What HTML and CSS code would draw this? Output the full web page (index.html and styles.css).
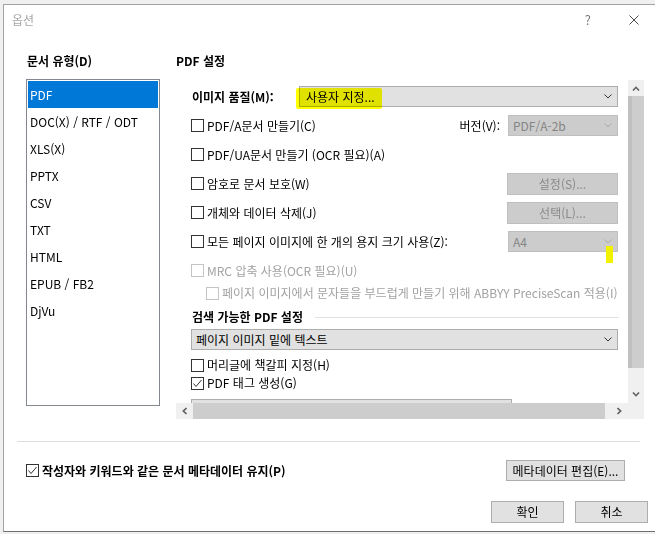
FILE: index.html
```html
<!DOCTYPE html>
<html lang="ko">
<head>
<meta charset="utf-8">
<title>옵션</title>
<link rel="stylesheet" href="styles.css">
</head>
<body>
<div class="backdrop"></div>
<div class="dialog">
  <div class="titlebar">
    <span class="title">옵션</span>
    <span class="help">?</span>
    <svg class="close" width="10" height="10" viewBox="0 0 10 10"><path d="M0.5 0.5 L9.5 9.5 M9.5 0.5 L0.5 9.5" stroke="#4a4a4a" stroke-width="1" fill="none"/></svg>
  </div>

  <div class="main">
    <div class="left">
      <div class="hdr hdr-left">문서 유형(D)</div>
      <div class="list">
        <div class="item selected">PDF</div>
        <div class="item">DOC(X) / RTF / ODT</div>
        <div class="item">XLS(X)</div>
        <div class="item">PPTX</div>
        <div class="item">CSV</div>
        <div class="item">TXT</div>
        <div class="item">HTML</div>
        <div class="item">EPUB / FB2</div>
        <div class="item">DjVu</div>
      </div>
    </div>

    <div class="right">
      <div class="hdr hdr-right">PDF 설정</div>
      <div class="scroll">
        <div class="viewport">
          <div class="row">
            <span class="qlabel">이미지 품질(M):</span>
            <div class="combo combo-q">
              <span class="combo-text">사용자 지정...</span>
              <svg class="chev" width="8" height="5" viewBox="0 0 8 5"><path d="M0.5 0.5 L4 4 L7.5 0.5" stroke="#333" fill="none"/></svg>
              <span class="marker"></span>
            </div>
          </div>
          <div class="row">
            <span class="check"><span class="cb"></span><span>PDF/A문서 만들기(C)</span></span>
            <span class="ver">버전(V):</span>
            <div class="combo combo-dis combo-side">
              <span class="combo-text">PDF/A-2b</span>
              <svg class="chev" width="8" height="5" viewBox="0 0 8 5"><path d="M0.5 0.5 L4 4 L7.5 0.5" stroke="#a8a8a8" fill="none"/></svg>
            </div>
          </div>
          <div class="row">
            <span class="check"><span class="cb"></span><span>PDF/UA문서 만들기 (OCR 필요)(A)</span></span>
          </div>
          <div class="row">
            <span class="check"><span class="cb"></span><span>암호로 문서 보호(W)</span></span>
            <span class="btn btn-dis btn-side">설정(S)...</span>
          </div>
          <div class="row">
            <span class="check"><span class="cb"></span><span>개체와 데이터 삭제(J)</span></span>
            <span class="btn btn-dis btn-side">선택(L)...</span>
          </div>
          <div class="row">
            <span class="check"><span class="cb"></span><span>모든 페이지 이미지에 한 개의 용지 크기 사용(Z):</span></span>
            <div class="combo combo-dis combo-side combo-a4">
              <span class="combo-text">A4</span>
              <svg class="chev" width="8" height="5" viewBox="0 0 8 5"><path d="M0.5 0.5 L4 4 L7.5 0.5" stroke="#a8a8a8" fill="none"/></svg>
              <span class="mark"></span>
            </div>
          </div>
          <div class="row">
            <span class="check dis"><span class="cb cb-dis"></span><span>MRC 압축 사용(OCR 필요)(U)</span></span>
          </div>
          <div class="row-sm indent">
            <span class="check dis"><span class="cb cb-dis"></span><span>페이지 이미지에서 문자들을 부드럽게 만들기 위해 ABBYY PreciseScan 적용(I)</span></span>
          </div>
          <div class="group">
            <span class="group-title">검색 가능한 PDF 설정</span>
            <span class="group-line"></span>
          </div>
          <div class="combo combo-full">
            <span class="combo-text">페이지 이미지 밑에 텍스트</span>
            <svg class="chev" width="8" height="5" viewBox="0 0 8 5"><path d="M0.5 0.5 L4 4 L7.5 0.5" stroke="#333" fill="none"/></svg>
          </div>
          <div class="row-sm gap7">
            <span class="check"><span class="cb"></span><span>머리글에 책갈피 지정(H)</span></span>
          </div>
          <div class="row-sm gap2">
            <span class="check"><span class="cb"><svg width="11" height="11" viewBox="0 0 11 11"><path d="M1.5 5.5 L4 8.5 L9.5 2" stroke="#333" fill="none"/></svg></span><span>PDF 태그 생성(G)</span></span>
          </div>
          <div class="partial"></div>
        </div>

        <div class="vbar">
          <span class="sb-arrow"><svg width="8" height="5" viewBox="0 0 8 5"><path d="M1 4.5 L4 1.3 L7 4.5" stroke="#606060" stroke-width="1.6" fill="none"/></svg></span>
          <span class="vthumb"></span>
          <span class="sb-fill"></span>
          <span class="sb-arrow sb-arrow-down"><svg width="8" height="5" viewBox="0 0 8 5"><path d="M1 0.5 L4 3.7 L7 0.5" stroke="#606060" stroke-width="1.6" fill="none"/></svg></span>
        </div>
        <div class="hbar">
          <span class="sb-harrow"><svg width="5" height="8" viewBox="0 0 5 8"><path d="M4.5 1 L1.3 4 L4.5 7" stroke="#606060" stroke-width="1.6" fill="none"/></svg></span>
          <span class="hthumb"></span>
          <span class="sb-fill"></span>
          <span class="sb-harrow"><svg width="5" height="8" viewBox="0 0 5 8"><path d="M0.5 1 L3.7 4 L0.5 7" stroke="#606060" stroke-width="1.6" fill="none"/></svg></span>
        </div>
        <div class="corner"></div>
      </div>
    </div>
  </div>

  <div class="sep"></div>

  <div class="meta">
    <span class="check bold"><span class="cb"><svg width="11" height="11" viewBox="0 0 11 11"><path d="M1.5 5.5 L4 8.5 L9.5 2" stroke="#333" fill="none"/></svg></span><span>작성자와 키워드와 같은 문서 메타데이터 유지(P)</span></span>
    <span class="btn btn-meta">메타데이터 편집(E)...</span>
  </div>

  <div class="actions">
    <span class="btn btn-act">확인</span>
    <span class="btn btn-act">취소</span>
  </div>
</div>
</body>
</html>
```

FILE: styles.css
```css
* { box-sizing: border-box; }
html, body { margin: 0; padding: 0; }
body {
  width: 655px;
  height: 534px;
  overflow: hidden;
  background: #f0f0f0;
  font-family: "Noto Sans CJK KR", sans-serif;
  font-size: 12px;
  line-height: 16px;
  color: #000;
}
.backdrop { height: 4px; }

.dialog {
  margin-left: 3px;
  height: 528px;
  background: #fff;
  border-top: 1px solid #a3a3a3;
  border-left: 1px solid #a3a3a3;
  border-bottom: 1px solid #707070;
  display: flex;
  flex-direction: column;
}

.titlebar {
  height: 30px;
  flex: none;
  display: flex;
  align-items: center;
  padding: 0 16px 0 8px;
}
.title { color: #a6a6a6; font-size: 12px; flex: 1; }
.help { color: #7a7a7a; font-size: 13px; margin-right: 38px; }
.close { flex: none; }

.main {
  flex: none;
  display: flex;
  gap: 16px;
  padding: 18px 0 0 22px;
}
.left { width: 134px; flex: none; }
.right { width: 468px; flex: none; }
.hdr { height: 16px; font-weight: 700; }
.hdr-left { padding-left: 1px; margin-bottom: 10px; }
.hdr-right { margin-bottom: 11px; }

.list {
  height: 327px;
  border: 1px solid #828790;
  padding: 1px;
}
.item {
  height: 27px;
  line-height: 27px;
  padding-left: 2px;
  color: #000;
}
.item.selected { background: #0078d7; color: #fff; }

.scroll {
  height: 339px;
  display: grid;
  grid-template-columns: 452px 16px;
  grid-template-rows: 323px 16px;
}
.viewport {
  overflow: hidden;
  padding: 2px 10px 0 15px;
}
.row { height: 29px; display: flex; align-items: center; }
.row-sm { height: 16px; display: flex; align-items: center; }
.indent { padding-left: 15px; }
.gap7 { margin-top: 7px; }
.gap2 { margin-top: 2px; }

.qlabel { font-weight: 700; width: 108px; padding-left: 1px; flex: none; white-space: nowrap; }

.check { display: flex; align-items: center; gap: 3px; white-space: nowrap; }
.check.dis { color: #a2a2a2; }
.check.bold { font-weight: 700; }
.cb {
  width: 13px; height: 13px; flex: none;
  border: 1px solid #333;
  background: #fff;
  display: flex;
}
.cb-dis { border-color: #c4c4c4; }

.combo {
  position: relative;
  display: flex;
  align-items: center;
  height: 21px;
  border: 1px solid #adadad;
  background: #e1e1e1;
  padding-left: 4px;
  white-space: nowrap;
}
.combo-text { flex: 1; }
.chev { flex: none; margin-right: 5px; }
.combo-q { flex: 1; padding-left: 6px; }
.combo-dis { background: #cccccc; border-color: #bfbfbf; color: #858585; }
.combo-side { width: 110px; flex: none; margin-left: auto; }
.ver { margin-left: auto; margin-right: 8px; }
.ver + .combo-side { margin-left: 0; }
.combo-full { margin-top: 4px; }

.marker {
  position: absolute;
  left: -4px;
  top: 1px;
  width: 86px;
  height: 21px;
  background: #ffff00;
  mix-blend-mode: multiply;
  border-radius: 2px;
}
.mark {
  position: absolute;
  left: 97px;
  top: 14px;
  width: 7px;
  height: 17px;
  background: #f2f200;
}

.btn {
  display: flex;
  align-items: center;
  justify-content: center;
  background: #e1e1e1;
  border: 1px solid #adadad;
  white-space: nowrap;
}
.btn-dis { background: #cccccc; border-color: #bfbfbf; color: #8a8a8a; }
.btn-side { width: 111px; height: 22px; margin-left: auto; }

.group { margin-top: 8px; height: 16px; display: flex; align-items: center; padding-left: 1px; }
.group-title { font-weight: 700; white-space: nowrap; }
.group-line { flex: 1; height: 1px; background: #dde2e6; margin-left: 12px; margin-right: -1px; }

.partial {
  margin-top: 8px;
  width: 321px;
  height: 22px;
  background: #e1e1e1;
  border: 1px solid #adadad;
}

.vbar { display: flex; flex-direction: column; background: #f0f0f0; }
.hbar { display: flex; background: #f0f0f0; }
.corner { background: #f0f0f0; }
.sb-arrow { height: 16px; display: flex; align-items: center; justify-content: center; flex: none; }
.sb-arrow-down { height: 17px; }
.vthumb { height: 272px; flex: none; background: #cdcdcd; border-left: 4px solid #c0c0c0; }
.sb-fill { flex: 1; }
.sb-harrow { width: 17px; display: flex; align-items: center; justify-content: center; flex: none; }
.hthumb { width: 412px; flex: none; background: #cdcdcd; }

.sep {
  flex: none;
  height: 1px;
  background: #dadde1;
  margin: 22px 15px 0 13px;
}

.meta {
  flex: none;
  margin-top: 18px;
  height: 21px;
  display: flex;
  align-items: center;
  padding: 0 30px 0 22px;
}
.btn-meta { margin-left: auto; width: 119px; height: 21px; }

.actions {
  flex: none;
  margin-top: 20px;
  height: 22px;
  display: flex;
  justify-content: flex-end;
  gap: 11px;
  padding-right: 7px;
}
.btn-act { width: 73px; height: 22px; }
```
